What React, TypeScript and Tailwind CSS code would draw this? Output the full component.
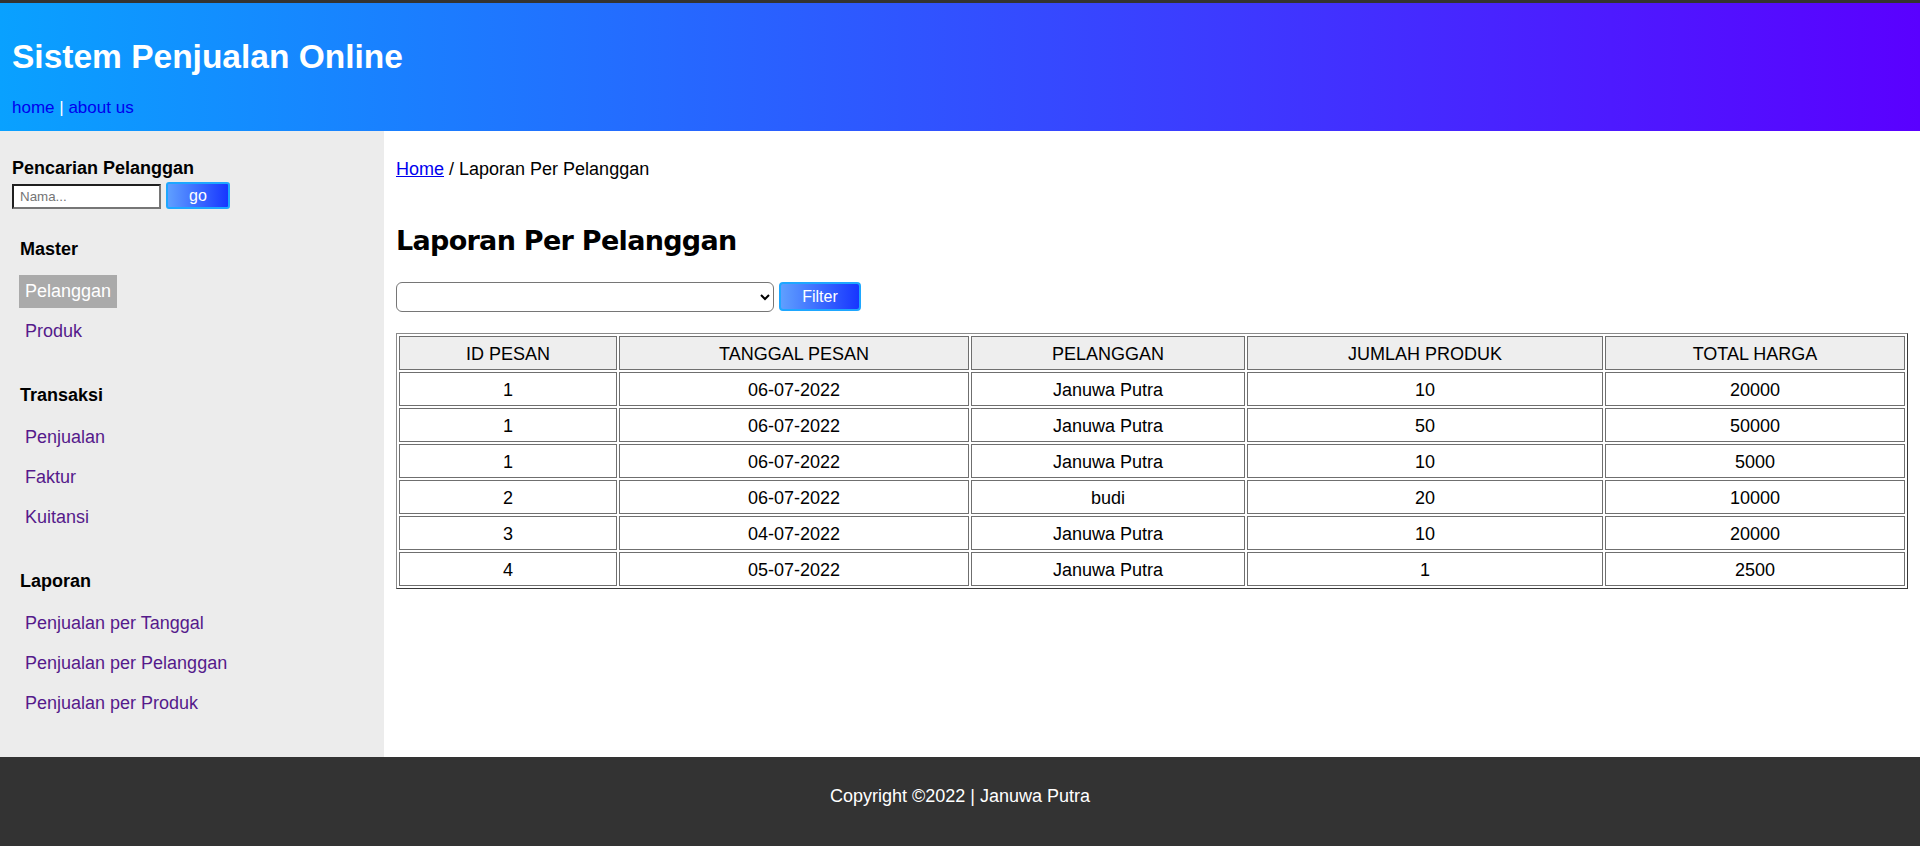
import React from "react";

const rows = [
  { id: 1, tgl: "06-07-2022", nama: "Januwa Putra", jml: 10, total: 20000 },
  { id: 1, tgl: "06-07-2022", nama: "Januwa Putra", jml: 50, total: 50000 },
  { id: 1, tgl: "06-07-2022", nama: "Januwa Putra", jml: 10, total: 5000 },
  { id: 2, tgl: "06-07-2022", nama: "budi", jml: 20, total: 10000 },
  { id: 3, tgl: "04-07-2022", nama: "Januwa Putra", jml: 10, total: 20000 },
  { id: 4, tgl: "05-07-2022", nama: "Januwa Putra", jml: 1, total: 2500 },
];

const menu = [
  { title: "Master", items: ["Pelanggan", "Produk"] },
  { title: "Transaksi", items: ["Penjualan", "Faktur", "Kuitansi"] },
  { title: "Laporan", items: ["Penjualan per Tanggal", "Penjualan per Pelanggan", "Penjualan per Produk"] },
];

const cell = "border border-[#6f6f6f] pt-[6px] pb-[4px] leading-[22px] text-center font-normal";

export default function App() {
  return (
    <div className="min-h-[846px] flex flex-col bg-white text-black font-['Liberation_Sans',Arial,sans-serif]">
      <div className="h-[3px] bg-[#333]" />

      {/* header */}
      <header className="bg-linear-to-r/srgb from-[#09a1ff] to-[#5a00ff] px-[12px] pt-[35px] pb-[14px]">
        <h1 className="text-[33.5px] leading-[38px] font-bold text-white">Sistem Penjualan Online</h1>
        <div className="mt-[23px] text-[17px] leading-[18px] text-white">
          <a href="#" className="text-[#0000ee]">home</a> | <a href="#" className="text-[#0000ee]">about us</a>
        </div>
      </header>

      <div className="flex flex-1">
        {/* sidebar */}
        <aside className="w-[384px] shrink-0 bg-[#ececec] pt-[27px] pb-[37px]">
          <div className="px-[12px]">
            <div className="text-[18px] leading-[21px] font-bold">Pencarian Pelanggan</div>
            <form className="mt-[3px] flex items-end gap-[5px]" onSubmit={(e) => e.preventDefault()}>
              <input
                placeholder="Nama..."
                className="h-[25px] w-[149px] bg-white border-2 border-t-[#1f1f1f] border-l-[#1f1f1f] border-r-[#767676] border-b-[#767676] pl-[6px] text-[13.33px] placeholder:text-[#757575] outline-none"
              />
              <button
                type="submit"
                className="h-[27px] w-[64px] rounded-[3px] border-2 border-[#1ea7ff] bg-linear-to-r/srgb from-[#5f9fff] to-[#1736ff] text-[16px] text-white"
              >
                go
              </button>
            </form>
          </div>

          <nav className="mt-[30px] px-[19px]">
            {menu.map((sec, i) => (
              <div key={sec.title} className={i > 0 ? "mt-[37px]" : ""}>
                <div className="text-[18px] leading-[21px] font-bold px-[1px]">{sec.title}</div>
                <ul className="mt-[15px] flex flex-col gap-[7px]">
                  {sec.items.map((it) => {
                    const active = it === "Pelanggan";
                    return (
                      <li key={it}>
                        <a
                          href="#"
                          className={
                            active
                              ? "inline-block h-[33px] px-[6px] py-[6px] text-[18px] leading-[21px] bg-[#aaa] text-white"
                              : "inline-block h-[33px] px-[6px] py-[6px] text-[18px] leading-[21px] text-[#551a8b]"
                          }
                        >
                          {it}
                        </a>
                      </li>
                    );
                  })}
                </ul>
              </div>
            ))}
          </nav>
        </aside>

        {/* main */}
        <main className="flex-1 px-[12px] pt-[28px] text-[18px]">
          <div className="leading-[21px]">
            <a href="#" className="text-[#0000ee] underline">Home</a> / Laporan Per Pelanggan
          </div>

          <h2 className="mt-[45px] text-[27px] leading-[32px] font-bold tracking-[-0.7px] font-['DejaVu_Sans',sans-serif]">
            Laporan Per Pelanggan
          </h2>

          <form className="mt-[25px] flex items-start gap-[5px]" onSubmit={(e) => e.preventDefault()}>
            <select className="h-[30px] w-[378px] rounded-[6px] border border-[#767676] bg-white text-[16px]">
              <option value=""></option>
              <option value="1">Januwa Putra</option>
              <option value="2">budi</option>
            </select>
            <button
              type="submit"
              className="h-[29px] w-[82px] rounded-[4px] border-2 border-[#1ea7ff] bg-linear-to-r/srgb from-[#5f9fff] to-[#1736ff] text-[16px] text-white"
            >
              Filter
            </button>
          </form>

          <table className="mt-[21px] w-full table-fixed border-separate border-spacing-[2px] border border-[#8a8a8a] border-r-[#3a3a3a] border-b-[#3a3a3a]">
            <thead>
              <tr className="bg-[#eee]">
                <th className={`${cell} w-[218px] bg-[#eee]`}>ID PESAN</th>
                <th className={`${cell} w-[350px] bg-[#eee]`}>TANGGAL PESAN</th>
                <th className={`${cell} w-[274px] bg-[#eee]`}>PELANGGAN</th>
                <th className={`${cell} w-[356px] bg-[#eee]`}>JUMLAH PRODUK</th>
                <th className={`${cell} bg-[#eee]`}>TOTAL HARGA</th>
              </tr>
            </thead>
            <tbody>
              {rows.map((r, i) => (
                <tr key={i}>
                  <td className={cell}>{r.id}</td>
                  <td className={cell}>{r.tgl}</td>
                  <td className={cell}>{r.nama}</td>
                  <td className={cell}>{r.jml}</td>
                  <td className={cell}>{r.total}</td>
                </tr>
              ))}
            </tbody>
          </table>
        </main>
      </div>

      <footer className="bg-[#333] pt-[29px] pb-[39px] text-center text-[18px] leading-[21px] text-white">
        Copyright ©2022 | Januwa Putra
      </footer>
    </div>
  );
}
